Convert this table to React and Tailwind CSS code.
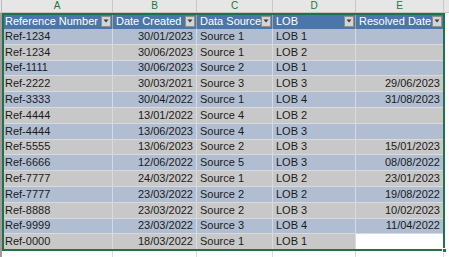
import React from "react";

const cols = [
  { key: "A", w: "w-[111px]", label: "Reference Number", align: "left" },
  { key: "B", w: "w-[84px]", label: "Date Created", align: "right" },
  { key: "C", w: "w-[76px]", label: "Data Source", align: "left" },
  { key: "D", w: "w-[83px]", label: "LOB", align: "left" },
  { key: "E", w: "w-[88px]", label: "Resolved Date", align: "right" },
];

const rows = [
  ["Ref-1234", "30/01/2023", "Source 1", "LOB 1", ""],
  ["Ref-1234", "30/06/2023", "Source 1", "LOB 2", ""],
  ["Ref-1111", "30/06/2023", "Source 2", "LOB 1", ""],
  ["Ref-2222", "30/03/2021", "Source 3", "LOB 3", "29/06/2023"],
  ["Ref-3333", "30/04/2022", "Source 1", "LOB 4", "31/08/2023"],
  ["Ref-4444", "13/01/2022", "Source 4", "LOB 2", ""],
  ["Ref-4444", "13/06/2023", "Source 4", "LOB 3", ""],
  ["Ref-5555", "13/06/2023", "Source 2", "LOB 3", "15/01/2023"],
  ["Ref-6666", "12/06/2022", "Source 5", "LOB 3", "08/08/2022"],
  ["Ref-7777", "24/03/2022", "Source 1", "LOB 2", "23/01/2023"],
  ["Ref-7777", "23/03/2022", "Source 2", "LOB 2", "19/08/2022"],
  ["Ref-8888", "23/03/2022", "Source 2", "LOB 3", "10/02/2023"],
  ["Ref-9999", "23/03/2022", "Source 3", "LOB 4", "11/04/2022"],
  ["Ref-0000", "18/03/2022", "Source 1", "LOB 1", ""],
];

function FilterBtn() {
  return (
    <div className="w-[10px] h-[11px] shrink-0 bg-[#d4d4d4] border border-[#8f8f8f] flex items-center justify-center mr-[1px]">
      <svg width="6" height="4" viewBox="0 0 6 4">
        <polygon points="0.5,0.5 5.5,0.5 3,3.5" fill="#3c3c3c" />
      </svg>
    </div>
  );
}

export default function App() {
  return (
    <div
      className="relative w-[449px] h-[257px] overflow-hidden bg-white text-[11px] leading-none text-[#1b1b1b]"
      style={{ fontFamily: '"Liberation Sans", Arial, sans-serif' }}
    >
      {/* column letters */}
      <div className="flex h-[13px] bg-[#e6e6e6] border-b border-[#c4c4c4]">
        <div className="w-[2px] shrink-0 border-r border-[#bdbdbd]" />
        {cols.map((c) => (
          <div
            key={c.key}
            className={`${c.w} shrink-0 flex items-center justify-center border-r border-[#c8c8c8] text-[10px] text-[#217346]`}
          >
            {c.key}
          </div>
        ))}
        <div className="flex-1" />
      </div>

      {/* table */}
      <div className="flex flex-col">
        <div className="flex h-[16px] bg-white">
          <div className="w-[2px] shrink-0 bg-[#9d9d9d]" />
          {cols.map((c) => (
            <div
              key={c.key}
              className={`${c.w} shrink-0 flex items-center justify-between bg-[#4b76aa] border-r border-[#a6a6a6] pl-[3px] text-white`}
            >
              <span className="whitespace-nowrap overflow-hidden">{c.label}</span>
              <FilterBtn />
            </div>
          ))}
          <div className="flex-1" />
        </div>
        {rows.map((r, i) => {
          const band = i % 2 === 0 ? "bg-[#b1bed1]" : "bg-[#c8c8c8]";
          return (
            <div key={i} className="flex h-[15.8px]">
              <div className="w-[2px] shrink-0 bg-[#9d9d9d]" />
              {cols.map((c, j) => {
                const isActive = i === rows.length - 1 && j === 4;
                return (
                  <div
                    key={c.key}
                    className={`${c.w} shrink-0 flex items-center border-r border-b ${
                      isActive ? "bg-white border-[#ffffff]" : `${band} border-[#d6dbe2]`
                    } ${c.align === "right" ? "justify-end pr-[3px]" : "justify-start pl-[3px]"}`}
                  >
                    <span className="whitespace-nowrap">{r[j]}</span>
                  </div>
                );
              })}
              <div className="flex-1" />
            </div>
          );
        })}
        <div className="flex h-[20px]">
          <div className="w-[2px] shrink-0 bg-[#9d9d9d]" />
          {cols.map((c) => (
            <div key={c.key} className={`${c.w} shrink-0 border-r border-[#dadada]`} />
          ))}
        </div>
      </div>

      {/* selection border */}
      <div className="absolute left-[2px] top-[13px] w-[443px] h-[238px] border-2 border-[#217346] pointer-events-none" />
      <div className="absolute left-[442px] top-[248px] w-[5px] h-[5px] bg-[#217346] border border-white" />
    </div>
  );
}
